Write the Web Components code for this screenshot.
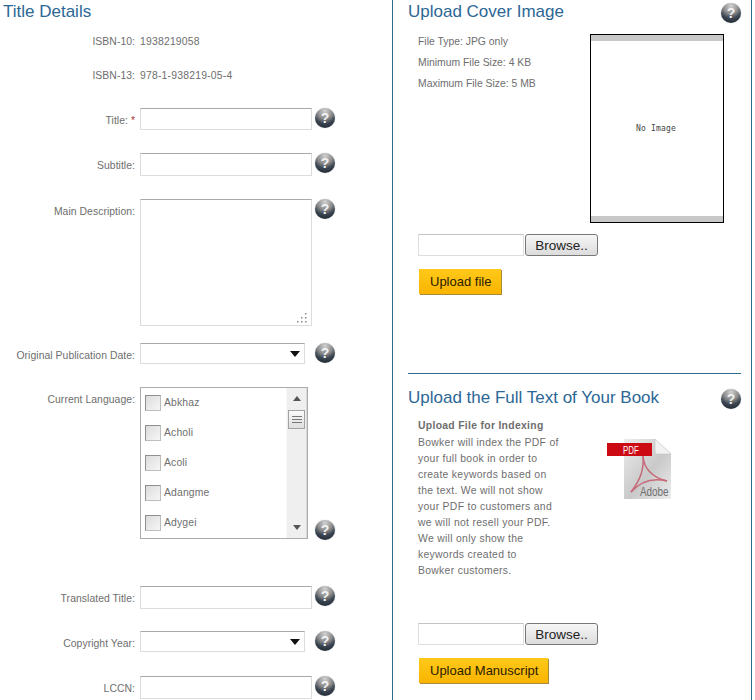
<!DOCTYPE html>
<html>
<head>
<meta charset="utf-8">
<title>Title Details</title>
<style>
  html, body { margin: 0; padding: 0; background: #fff; overflow: hidden; height: 700px; }
  body { font-family: "Liberation Sans", Arial, sans-serif; font-size: 10.4px; color: #6e6e6e; }
</style>
</head>
<body>

<book-page>
  <title-column slot="left">
    <panel-heading>Title Details</panel-heading>
    <form-row label="ISBN-10:" style="margin-top:13px">1938219058</form-row>
    <form-row label="ISBN-13:" style="margin-top:20px">978-1-938219-05-4</form-row>

    <form-row label="Title:" required help style="margin-top:25px"><text-box></text-box></form-row>
    <form-row label="Subtitle:" help style="margin-top:23px"><text-box style="height:23px"></text-box></form-row>
    <form-row label="Main Description:" help style="margin-top:23px"><text-box multiline style="height:127px"></text-box></form-row>
    <form-row label="Original Publication Date:" help style="margin-top:17px"><select-box></select-box></form-row>
    <form-row label="Current Language:" help="end" style="margin-top:23px">
      <language-list>
        <language-item>Abkhaz</language-item>
        <language-item>Acholi</language-item>
        <language-item>Acoli</language-item>
        <language-item>Adangme</language-item>
        <language-item>Adygei</language-item>
      </language-list>
    </form-row>
    <form-row label="Translated Title:" help style="margin-top:47px"><text-box style="height:23px"></text-box></form-row>
    <form-row label="Copyright Year:" help style="margin-top:22px"><select-box></select-box></form-row>
    <form-row label="LCCN:" help style="margin-top:24px"><text-box style="height:23px"></text-box></form-row>
  </title-column>

  <upload-panel slot="right" heading="Upload Cover Image" style="height:373px">
    <div class="cover-top" style="display:flex;justify-content:space-between;width:306px;margin-top:-2px">
      <info-list style="margin-top:-3px">
        <div>File Type: JPG only</div>
        <div>Minimum File Size: 4 KB</div>
        <div>Maximum File Size: 5 MB</div>
      </info-list>
      <cover-preview></cover-preview>
    </div>
    <file-picker style="margin-top:11px"></file-picker>
    <gold-button style="margin-top:13px">Upload file</gold-button>
  </upload-panel>

  <upload-panel slot="right" heading="Upload the Full Text of Your Book" divider style="height:327px">
    <div style="display:flex;height:200px">
      <index-note>
        <b>Upload File for Indexing</b>
        Bowker will index the PDF of your full book in order to create keywords based on the text. We will not show your PDF to customers and we will not resell your PDF. We will only show the keywords created to<br>Bowker customers.
      </index-note>
      <pdf-icon style="margin-left:43px;margin-top:17px"></pdf-icon>
    </div>
    <file-picker style="margin-top:1px"></file-picker>
    <gold-button style="margin-top:13px">Upload Manuscript</gold-button>
  </upload-panel>
</book-page>

<script>
// outer frame, two columns with the blue rules between them
class BookPage extends HTMLElement {
  constructor() {
    super();
    this.attachShadow({mode: "open"}).innerHTML = `<style>
      :host { display: grid; grid-template-columns: 392px 360px; height: 700px; width: 752px; overflow: hidden; }
      .left { display: block; }
      .right { border-left: 1px solid #2f6b8f; border-right: 1px solid #2f6b8f; padding-left: 15px; }
    </style>
    <div class="left"><slot name="left"></slot></div>
    <div class="right"><slot name="right"></slot></div>`;
  }
}

class TitleColumn extends HTMLElement {
  constructor() {
    super();
    this.attachShadow({mode: "open"}).innerHTML = `<style>
      :host { display: block; padding-left: 3px; }
    </style><slot></slot>`;
  }
}

class PanelHeading extends HTMLElement {
  constructor() {
    super();
    this.attachShadow({mode: "open"}).innerHTML = `<style>
      :host { display: block; font-size: 17px; line-height: 22px; padding-top: 1px; margin-bottom: -1px; color: #2c6796; }
    </style><slot></slot>`;
  }
}

class HelpIcon extends HTMLElement {
  constructor() {
    super();
    this.attachShadow({mode: "open"}).innerHTML = `<style>
      :host {
        display: flex; width: 20px; height: 20px; border-radius: 50%;
        align-items: center; justify-content: center; flex: none;
        background: radial-gradient(circle at 50% 15%, #d2d2d2 0, #8a8a8a 40%, #3c4652 62%, #141c26 100%);
        color: #f1f1f1; font: bold 14px/20px "Liberation Sans", sans-serif;
        box-shadow: 0 0 1px #8896a4;
      }
    </style>?`;
  }
}

// label on the right edge of a 135px gutter, control, optional help bubble
class FormRow extends HTMLElement {
  constructor() {
    super();
    const star = this.hasAttribute("required") ? ` <span class="req">*</span>` : "";
    const help = this.hasAttribute("help") ? `<help-icon class="${this.getAttribute("help")}"></help-icon>` : "";
    const plain = !this.hasAttribute("help");
    this.attachShadow({mode: "open"}).innerHTML = `<style>
      :host { display: flex; align-items: flex-start; }
      .label { width: 132px; margin-right: 5px; text-align: right; line-height: 14px; letter-spacing: .05px; padding-top: ${plain ? 0 : 6}px; flex: none; }
      .req { color: #a33; }
      .control { width: 175px; line-height: 14px; flex: none; letter-spacing: ${plain ? ".2px" : "0"}; }
      help-icon.end { align-self: flex-end; margin-bottom: -1px; }
    </style>
    <div class="label">${this.getAttribute("label")}${star}</div>
    <div class="control"><slot></slot></div>
    ${help}`;
  }
}

class TextBox extends HTMLElement {
  constructor() {
    super();
    const grip = this.hasAttribute("multiline")
      ? `<svg width="11" height="10" viewBox="0 0 11 10"><g fill="#8a8a8a"><rect x="8" y="0" width="1.5" height="1.5"/><rect x="8" y="4" width="1.5" height="1.5"/><rect x="4" y="4" width="1.5" height="1.5"/><rect x="8" y="8" width="1.5" height="1.5"/><rect x="4" y="8" width="1.5" height="1.5"/><rect x="0" y="8" width="1.5" height="1.5"/></g></svg>` : "";
    this.attachShadow({mode: "open"}).innerHTML = `<style>
      :host {
        display: flex; align-items: flex-end; justify-content: flex-end; box-sizing: border-box;
        width: 172px; height: 22px; padding: 0 3px 2px 0;
        background: #fff; border: 1px solid #dcdcdc; border-top-color: #a9a9a9;
      }
    </style>${grip}`;
  }
}

class SelectBox extends HTMLElement {
  constructor() {
    super();
    this.attachShadow({mode: "open"}).innerHTML = `<style>
      :host {
        display: flex; align-items: center; justify-content: flex-end; box-sizing: border-box;
        width: 165px; height: 21px; padding-right: 4px;
        background: #fff; border: 1px solid #dcdcdc; border-top-color: #a9a9a9;
      }
      i { width: 0; height: 0; border: 5px solid transparent; border-top: 6px solid #111; border-bottom: 0; }
    </style><i></i>`;
  }
}

class LanguageList extends HTMLElement {
  constructor() {
    super();
    this.attachShadow({mode: "open"}).innerHTML = `<style>
      :host {
        display: flex; box-sizing: border-box; width: 168px; height: 152px;
        border: 1px solid #ababab;
      }
      .items { flex: 1; padding: 7px 0 0 4px; overflow: hidden; }
      .bar {
        width: 19px; flex: none; display: flex; flex-direction: column; align-items: center;
        background: #efefef; border-left: 1px solid #f7f7f7; border-right: 1px solid #d8d8d8;
      }
      .up, .down { width: 0; height: 0; border: 4px solid transparent; flex: none; }
      .up { border-bottom: 5px solid #555; border-top: 0; margin-top: 8px; }
      .down { border-top: 5px solid #555; border-bottom: 0; margin: auto 0 8px; }
      .thumb {
        width: 17px; height: 19px; box-sizing: border-box; margin-top: 9px;
        border: 1px solid #a2a2a2; background: linear-gradient(#fafafa, #dedede);
        display: flex; flex-direction: column; align-items: center; justify-content: center; gap: 2px;
      }
      .thumb b { display: block; width: 10px; height: 1px; background: #777; }
    </style>
    <div class="items"><slot></slot></div>
    <div class="bar">
      <div class="up"></div>
      <div class="thumb"><b></b><b></b><b></b></div>
      <div class="down"></div>
    </div>`;
  }
}

class LanguageItem extends HTMLElement {
  constructor() {
    super();
    this.attachShadow({mode: "open"}).innerHTML = `<style>
      :host { display: flex; align-items: center; height: 16px; margin-bottom: 14px; gap: 3px; line-height: 14px; letter-spacing: .15px; }
      .box {
        width: 16px; height: 16px; box-sizing: border-box; flex: none;
        border: 1px solid #8f8f8f; border-right-color: #bdbdbd; border-bottom-color: #bdbdbd;
        background: linear-gradient(135deg, #dcdcdc, #f6f6f6);
      }
    </style><div class="box"></div><span><slot></slot></span>`;
  }
}

class UploadPanel extends HTMLElement {
  constructor() {
    super();
    const rule = this.hasAttribute("divider") ? `<div class="rule"></div>` : "";
    this.attachShadow({mode: "open"}).innerHTML = `<style>
      :host { display: block; box-sizing: border-box; width: 343px; overflow: hidden; }
      .rule { height: 1px; background: #2f6b8f; width: 333px; margin-bottom: 12px; }
      .head { display: flex; justify-content: space-between; align-items: flex-start; width: 333px; }
      .head help-icon { margin-top: 3px; }
      .body { padding: 13px 0 0 10px; }
    </style>
    ${rule}
    <div class="head"><panel-heading>${this.getAttribute("heading")}</panel-heading><help-icon></help-icon></div>
    <div class="body"><slot></slot></div>`;
  }
}

class InfoList extends HTMLElement {
  constructor() {
    super();
    this.attachShadow({mode: "open"}).innerHTML = `<style>
      :host { display: block; line-height: 21px; }
    </style><slot></slot>`;
  }
}

class CoverPreview extends HTMLElement {
  constructor() {
    super();
    this.attachShadow({mode: "open"}).innerHTML = `<style>
      :host {
        display: flex; align-items: center; justify-content: center; box-sizing: border-box;
        width: 134px; height: 189px; border: 1px solid #000; background: #fff;
        position: relative;
        font: 8px/10px "DejaVu Sans Mono", "Liberation Mono", monospace; letter-spacing: .2px; color: #444;
      }
      i { position: absolute; left: 0; right: 0; height: 6px; background: #c8c8c8; }
      .t { top: 0; } .b { bottom: 0; }
      span { margin-right: 2px; }
    </style><i class="t"></i><span>No Image</span><i class="b"></i>`;
  }
}

class FilePicker extends HTMLElement {
  constructor() {
    super();
    this.attachShadow({mode: "open"}).innerHTML = `<style>
      :host { display: flex; gap: 1px; height: 22px; }
      .field { width: 106px; box-sizing: border-box; border: 1px solid #dedede; border-top-color: #c4c4c4; background: #fff; }
      .browse {
        width: 73px; box-sizing: border-box; border: 1px solid #777; border-radius: 3px;
        background: linear-gradient(#f6f6f6, #dcdcdc);
        font-size: 13.5px; line-height: 22px; color: #222; text-align: center;
      }
    </style><div class="field"></div><div class="browse">Browse..</div>`;
  }
}

class GoldButton extends HTMLElement {
  constructor() {
    super();
    this.attachShadow({mode: "open"}).innerHTML = `<style>
      :host {
        display: block; width: fit-content; box-sizing: border-box; height: 25px; margin-left: 1px;
        padding: 0 10px 0 11px; background: linear-gradient(#ffc91a, #f9b400);
        box-shadow: 1px 1px 0 #a88a3c;
        font-size: 13px; line-height: 25px; color: #2a2000;
      }
    </style><slot></slot>`;
  }
}

class IndexNote extends HTMLElement {
  constructor() {
    super();
    this.attachShadow({mode: "open"}).innerHTML = `<style>
      :host { display: block; width: 146px; line-height: 16px; letter-spacing: .3px; flex: none; margin-top: -4px; }
      ::slotted(b) { display: block; margin-bottom: 1px; }
    </style><slot></slot>`;
  }
}

class PdfIcon extends HTMLElement {
  constructor() {
    super();
    this.attachShadow({mode: "open"}).innerHTML = `<style>
      :host { display: block; width: 64px; height: 60px; flex: none; }
      svg { display: block; }
    </style>
    <svg width="64" height="60" viewBox="0 0 64 60">
      <defs>
        <linearGradient id="pg" x1="0" y1="0" x2="1" y2="1">
          <stop offset="0" stop-color="#ececec"/><stop offset=".55" stop-color="#c9c9c9"/><stop offset="1" stop-color="#ececec"/>
        </linearGradient>
      </defs>
      <path d="M17 0H48L64 15V60H17Z" fill="url(#pg)"/>
      <path d="M48 0L64 15H50Q48 15 48 13Z" fill="#f2f2f2" stroke="#bbb" stroke-width=".5"/>
      <g fill="none" stroke="#c66a7a" stroke-width="1.5">
        <path d="M36 17C37 30 44 38 60 42"/>
        <path d="M36 17C37 30 34 40 24 53"/>
        <path d="M24 53C32 44 44 38 60 42"/>
      </g>
      <rect x="0" y="4" width="45" height="13" fill="#cc0a14"/>
      <text transform="translate(16 15) scale(.72 1)" font-family="Liberation Sans, sans-serif" font-size="11" fill="#fff">PDF</text>
      <text transform="translate(33 57) scale(.76 1)" font-family="Liberation Sans, sans-serif" font-size="13" fill="#6e6e6e">Adobe</text>
    </svg>`;
  }
}

customElements.define("help-icon", HelpIcon);
customElements.define("panel-heading", PanelHeading);
customElements.define("text-box", TextBox);
customElements.define("select-box", SelectBox);
customElements.define("language-item", LanguageItem);
customElements.define("language-list", LanguageList);
customElements.define("form-row", FormRow);
customElements.define("title-column", TitleColumn);
customElements.define("info-list", InfoList);
customElements.define("cover-preview", CoverPreview);
customElements.define("file-picker", FilePicker);
customElements.define("gold-button", GoldButton);
customElements.define("index-note", IndexNote);
customElements.define("pdf-icon", PdfIcon);
customElements.define("upload-panel", UploadPanel);
customElements.define("book-page", BookPage);
</script>
</body>
</html>
